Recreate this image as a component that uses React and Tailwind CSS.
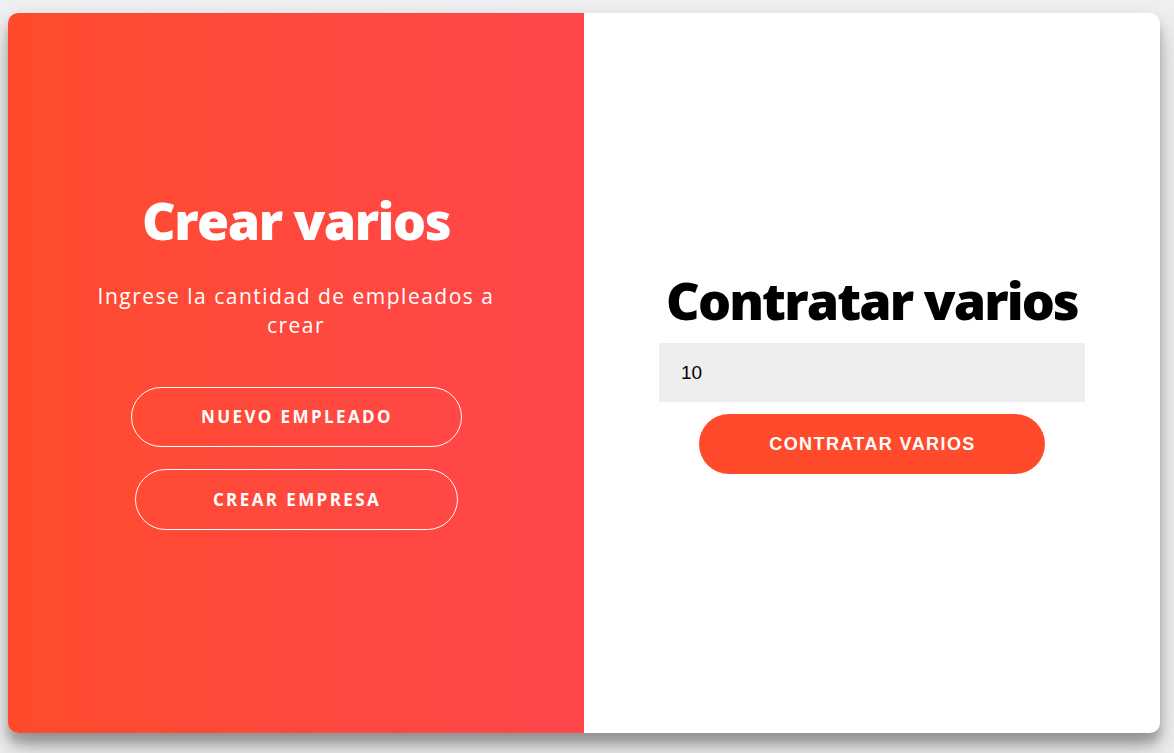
const heading = { fontFamily: '"Open Sans", "Noto Sans", sans-serif' };
const arial = { fontFamily: '"Liberation Sans", Arial, sans-serif' };

export default function App() {
  return (
    <div className="min-h-[753px] w-full bg-[#f0f0f2] pl-[8px] pt-[13px]">
      <div className="flex h-[720px] w-[1152px] overflow-hidden rounded-[10px] bg-white shadow-[0_14px_28px_rgba(0,0,0,0.25),0_10px_10px_rgba(0,0,0,0.22)]">
        {/* left panel */}
        <div
          className="flex w-[576px] flex-col items-center bg-gradient-to-r from-[#ff4b2b] to-[#ff464b] pt-[177px] text-white"
          style={heading}
        >
          <h1 className="text-[52px] font-extrabold leading-[60px] tracking-[-1.5px]">Crear varios</h1>
          <p className="mt-[32px] w-[420px] text-center text-[21px] font-normal leading-[29px] tracking-[1.5px]">
            Ingrese la cantidad de empleados a crear
          </p>
          <button className="mt-[47px] h-[60px] w-[331px] rounded-full border border-white pl-[2px] text-[17px] font-bold tracking-[2.4px]">
            NUEVO EMPLEADO
          </button>
          <button className="mt-[22px] h-[61px] w-[323px] rounded-full border border-white pl-[2px] text-[17px] font-bold tracking-[2.4px]">
            CREAR EMPRESA
          </button>
        </div>

        {/* right panel */}
        <div className="flex w-[576px] flex-col items-center pt-[257px]">
          <h1 className="text-[52px] font-extrabold leading-[60px] tracking-[-1.9px] text-black" style={heading}>
            Contratar varios
          </h1>
          <input
            className="mt-[13px] h-[59px] w-[426px] bg-[#eeeeee] px-[22px] text-[19px] text-black outline-none"
            style={arial}
            defaultValue="10"
          />
          <button
            className="mt-[12px] h-[60px] w-[346px] rounded-full bg-[#ff4b2b] pl-[1px] text-[18px] font-bold tracking-[1.4px] text-white"
            style={arial}
          >
            CONTRATAR VARIOS
          </button>
        </div>
      </div>
    </div>
  );
}
